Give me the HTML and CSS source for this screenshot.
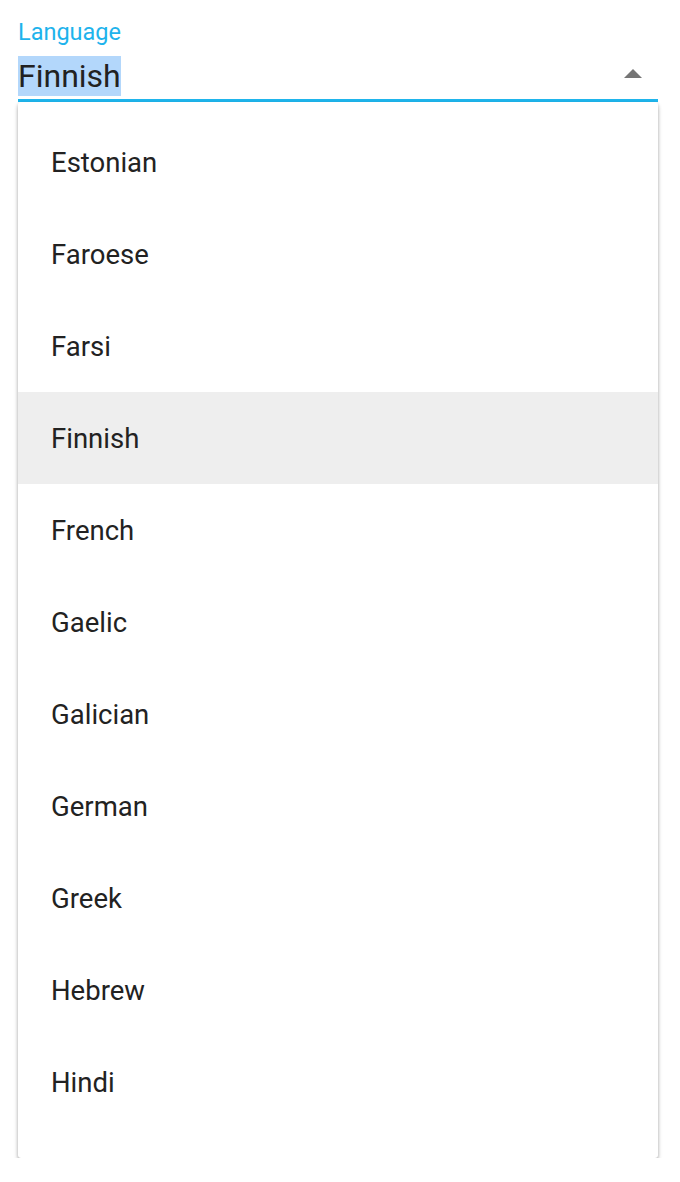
FILE: index.html
```html
<!DOCTYPE html>
<html>
<head>
<meta charset="utf-8">
<link rel="stylesheet" href="styles.css">
</head>
<body>
<div class="field">
  <div class="label">Language</div>
  <div class="control">
    <span class="value">Finnish</span>
    <svg class="arrow" width="18" height="9" viewBox="0 0 18 9"><path d="M0 9 L9 0 L18 9 Z" fill="#757575"/></svg>
  </div>
  <div class="menu">
    <div class="item">Estonian</div>
    <div class="item">Faroese</div>
    <div class="item">Farsi</div>
    <div class="item active">Finnish</div>
    <div class="item">French</div>
    <div class="item">Gaelic</div>
    <div class="item">Galician</div>
    <div class="item">German</div>
    <div class="item">Greek</div>
    <div class="item">Hebrew</div>
    <div class="item">Hindi</div>
  </div>
</div>
</body>
</html>
```
FILE: styles.css
```css
html, body {
  margin: 0;
  padding: 0;
  background: #ffffff;
}
body {
  font-family: Roboto, "Liberation Sans", sans-serif;
  color: #212121;
}
.field {
  width: 640px;
  margin-left: 18px;
  padding-top: 17px;
}
.label {
  font-size: 23.5px;
  line-height: 30px;
  color: #1eb3ec;
  height: 30px;
}
.control {
  display: flex;
  align-items: center;
  justify-content: space-between;
  height: 55px;
  border-bottom: 3px solid #1fb5ec;
  box-sizing: border-box;
  padding-top: 9px;
  padding-bottom: 3px;
}
.value {
  font-size: 32px;
  line-height: 40px;
  background: #b3d7fb;
  color: #212121;
}
.arrow {
  margin-right: 16px;
  margin-top: -6px;
}
.menu {
  background: #ffffff;
  box-shadow: 0 3px 4px rgba(0,0,0,0.28), 0 1px 3px rgba(0,0,0,0.12);
  border-radius: 3px;
  padding-top: 14px;
  padding-bottom: 30px;
}
.item {
  height: 92px;
  display: flex;
  align-items: center;
  padding-left: 33px;
  font-size: 27.5px;
  color: #222222;
}
.item.active {
  background: #eeeeee;
}
```
